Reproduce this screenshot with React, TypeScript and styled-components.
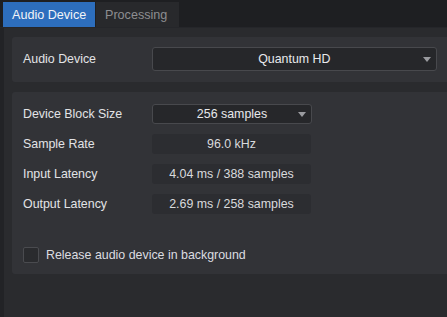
import React from "react";
import styled, { createGlobalStyle } from "styled-components";

const Global = createGlobalStyle`
  html, body { margin: 0; padding: 0; background: #2a2b2e; }
  body { font-family: "Liberation Sans", Arial, sans-serif; font-size: 12.4px; }
  #root { width: 447px; height: 317px; overflow: hidden; }
`;

const Page = styled.div`
  width: 447px;
  height: 317px;
  display: flex;
  flex-direction: column;
  background: #2a2b2e;
`;

const TabBar = styled.div`
  height: 28px;
  flex: none;
  display: flex;
  align-items: flex-end;
  padding-left: 3px;
  background: #1e1f22;
  box-sizing: border-box;
  border-bottom: 1px solid #25262a;
`;

const Tab = styled.div<{ $active?: boolean }>`
  height: 25px;
  display: flex;
  align-items: center;
  padding: 0 0 0 9px;
  white-space: nowrap;
  box-sizing: border-box;
  width: ${(p) => (p.$active ? "92px" : "83px")};
  background: ${(p) => (p.$active ? "#2d6ebd" : "#28292c")};
  color: ${(p) => (p.$active ? "#f2f4f8" : "#8d8e91")};
  font-size: 12.6px;
  margin-right: 1px;
`;

const Body = styled.div`
  flex: 1;
  display: flex;
  border-left: 4px solid #222326;
  padding: 9px 0 0 8px;
  flex-direction: column;
  gap: 10px;
`;

const Panel = styled.div<{ $pad: string }>`
  background: #323337;
  border-radius: 3px 0 0 3px;
  padding: ${(p) => p.$pad};
  display: flex;
  flex-direction: column;
`;

const Row = styled.div<{ $h: number; $gap?: number }>`
  height: ${(p) => p.$h}px;
  display: flex;
  align-items: center;
  margin-bottom: ${(p) => p.$gap ?? 0}px;
`;

const Label = styled.div`
  color: #e2e3e6;
  padding-left: 11px;
  box-sizing: border-box;
  width: 140px;
`;

const Select = styled.div<{ $w: number }>`
  position: relative;
  width: ${(p) => p.$w}px;
  height: 100%;
  box-sizing: border-box;
  background: #26272a;
  border: 1px solid #48494d;
  border-radius: 3px;
  color: #e8e9ec;
  display: flex;
  align-items: center;
  justify-content: center;
`;

const Arrow = styled.span`
  position: absolute;
  right: 5px;
  top: 50%;
  margin-top: -2px;
  width: 0;
  height: 0;
  border-left: 4px solid transparent;
  border-right: 4px solid transparent;
  border-top: 5px solid #9a9b9f;
`;

const Value = styled.div`
  width: 159px;
  height: 100%;
  box-sizing: border-box;
  background: #2c2d31;
  border-radius: 3px;
  color: #d9dadd;
  display: flex;
  align-items: center;
  justify-content: center;
`;

const CheckRow = styled.label`
  display: flex;
  align-items: center;
  gap: 7px;
  padding-left: 11px;
  color: #dcdde0;
  margin-top: 33px;
`;

const Box = styled.span`
  width: 16px;
  height: 16px;
  box-sizing: border-box;
  background: #2a2b2e;
  border: 1px solid #4a4b4f;
  border-radius: 2px;
`;

export default function App() {
  return (
    <>
      <Global />
      <Page>
        <TabBar>
          <Tab $active>Audio Device</Tab>
          <Tab>Processing</Tab>
        </TabBar>
        <Body>
          <Panel $pad="10px 10px 11px 0">
            <Row $h={24}>
              <Label>Audio Device</Label>
              <Select $w={286}>
                Quantum HD
                <Arrow />
              </Select>
            </Row>
          </Panel>
          <Panel $pad="12px 0 11px 0">
            <Row $h={20} $gap={10}>
              <Label>Device Block Size</Label>
              <Select $w={160}>
                256 samples
                <Arrow />
              </Select>
            </Row>
            <Row $h={20} $gap={10}>
              <Label>Sample Rate</Label>
              <Value>96.0 kHz</Value>
            </Row>
            <Row $h={20} $gap={10}>
              <Label>Input Latency</Label>
              <Value>4.04 ms / 388 samples</Value>
            </Row>
            <Row $h={20}>
              <Label>Output Latency</Label>
              <Value>2.69 ms / 258 samples</Value>
            </Row>
            <CheckRow>
              <Box />
              Release audio device in background
            </CheckRow>
          </Panel>
        </Body>
      </Page>
    </>
  );
}
